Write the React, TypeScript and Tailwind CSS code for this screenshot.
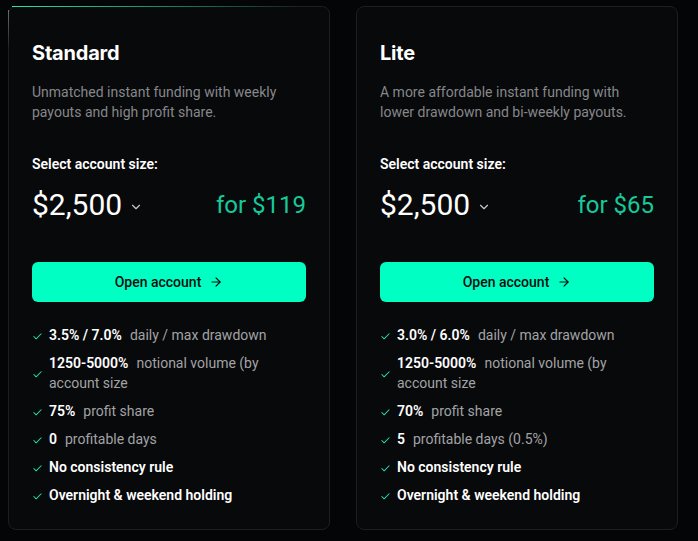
import { ArrowRight, Check, ChevronDown } from "lucide-react"

type Feature = { bold: string; rest?: string }

type Plan = {
  name: string
  desc: string
  size: string
  price: string
  glow?: boolean
  features: Feature[]
}

const plans: Plan[] = [
  {
    name: "Standard",
    desc: "Unmatched instant funding with weekly payouts and high profit share.",
    size: "$2,500",
    price: "for $119",
    glow: true,
    features: [
      { bold: "3.5% / 7.0%", rest: "daily / max drawdown" },
      { bold: "1250-5000%", rest: "notional volume (by account size" },
      { bold: "75%", rest: "profit share" },
      { bold: "0", rest: "profitable days" },
      { bold: "No consistency rule" },
      { bold: "Overnight & weekend holding" },
    ],
  },
  {
    name: "Lite",
    desc: "A more affordable instant funding with lower drawdown and bi-weekly payouts.",
    size: "$2,500",
    price: "for $65",
    features: [
      { bold: "3.0% / 6.0%", rest: "daily / max drawdown" },
      { bold: "1250-5000%", rest: "notional volume (by account size" },
      { bold: "70%", rest: "profit share" },
      { bold: "5", rest: "profitable days (0.5%)" },
      { bold: "No consistency rule" },
      { bold: "Overnight & weekend holding" },
    ],
  },
]

function PlanCard({ plan }: { plan: Plan }) {
  return (
    <div className="relative w-[322px] rounded-lg border border-[#1c1e21] bg-[#08090b] px-[23px] pt-8 pb-6">
      {plan.glow && (
        <>
          <div className="absolute -top-px left-[3px] w-[290px] h-px bg-gradient-to-r from-[#2de0b0] via-[#18b890]/70 to-transparent" />
          <div className="absolute top-[3px] -left-px w-px h-[40px] bg-gradient-to-b from-[#6b6e70] to-transparent" />
        </>
      )}
      <h2 className="text-[20px] leading-7 font-bold text-white tracking-[-0.01em]" style={{ fontFamily: "Inter, sans-serif" }}>
        {plan.name}
      </h2>
      <p className="mt-[15px] text-[14px] leading-5 text-[#86878a] pr-4">{plan.desc}</p>
      <div className="mt-8 text-[14px] leading-5 font-semibold text-white">Select account size:</div>
      <div className="mt-[11px] flex items-center justify-between h-10">
        <div className="flex items-center gap-[7px] text-white">
          <span className="text-[30px] leading-10">{plan.size}</span>
          <ChevronDown size={14} strokeWidth={2} className="text-[#c8c8c8] mt-1" />
        </div>
        <span className="text-[24px] leading-10 text-[#17c99a]">{plan.price}</span>
      </div>
      <button className="mt-[37px] w-full h-10 rounded-md bg-[#00ffc3] flex items-center justify-center gap-2 text-[14px] font-medium text-[#0b0c0e]">
        Open account
        <ArrowRight size={14} strokeWidth={2} />
      </button>
      <ul className="mt-[23px] flex flex-col gap-2">
        {plan.features.map((f, i) => (
          <li key={i} className="flex items-center gap-[6px] text-[14px] leading-5">
            <Check size={11} strokeWidth={2.25} className="text-[#22e0aa] shrink-0 mt-[2px]" />
            <span className="text-white font-semibold pr-4">
              {f.bold}
              {f.rest && <span className="ml-2 font-normal text-[#a2a3a5]">{f.rest}</span>}
            </span>
          </li>
        ))}
      </ul>
    </div>
  )
}

export default function App() {
  return (
    <div className="min-h-screen bg-[#040506] pl-2 pt-[6px] flex items-start gap-[26px]" style={{ fontFamily: "Roboto, sans-serif" }}>
      {plans.map((p) => (
        <PlanCard key={p.name} plan={p} />
      ))}
    </div>
  )
}
